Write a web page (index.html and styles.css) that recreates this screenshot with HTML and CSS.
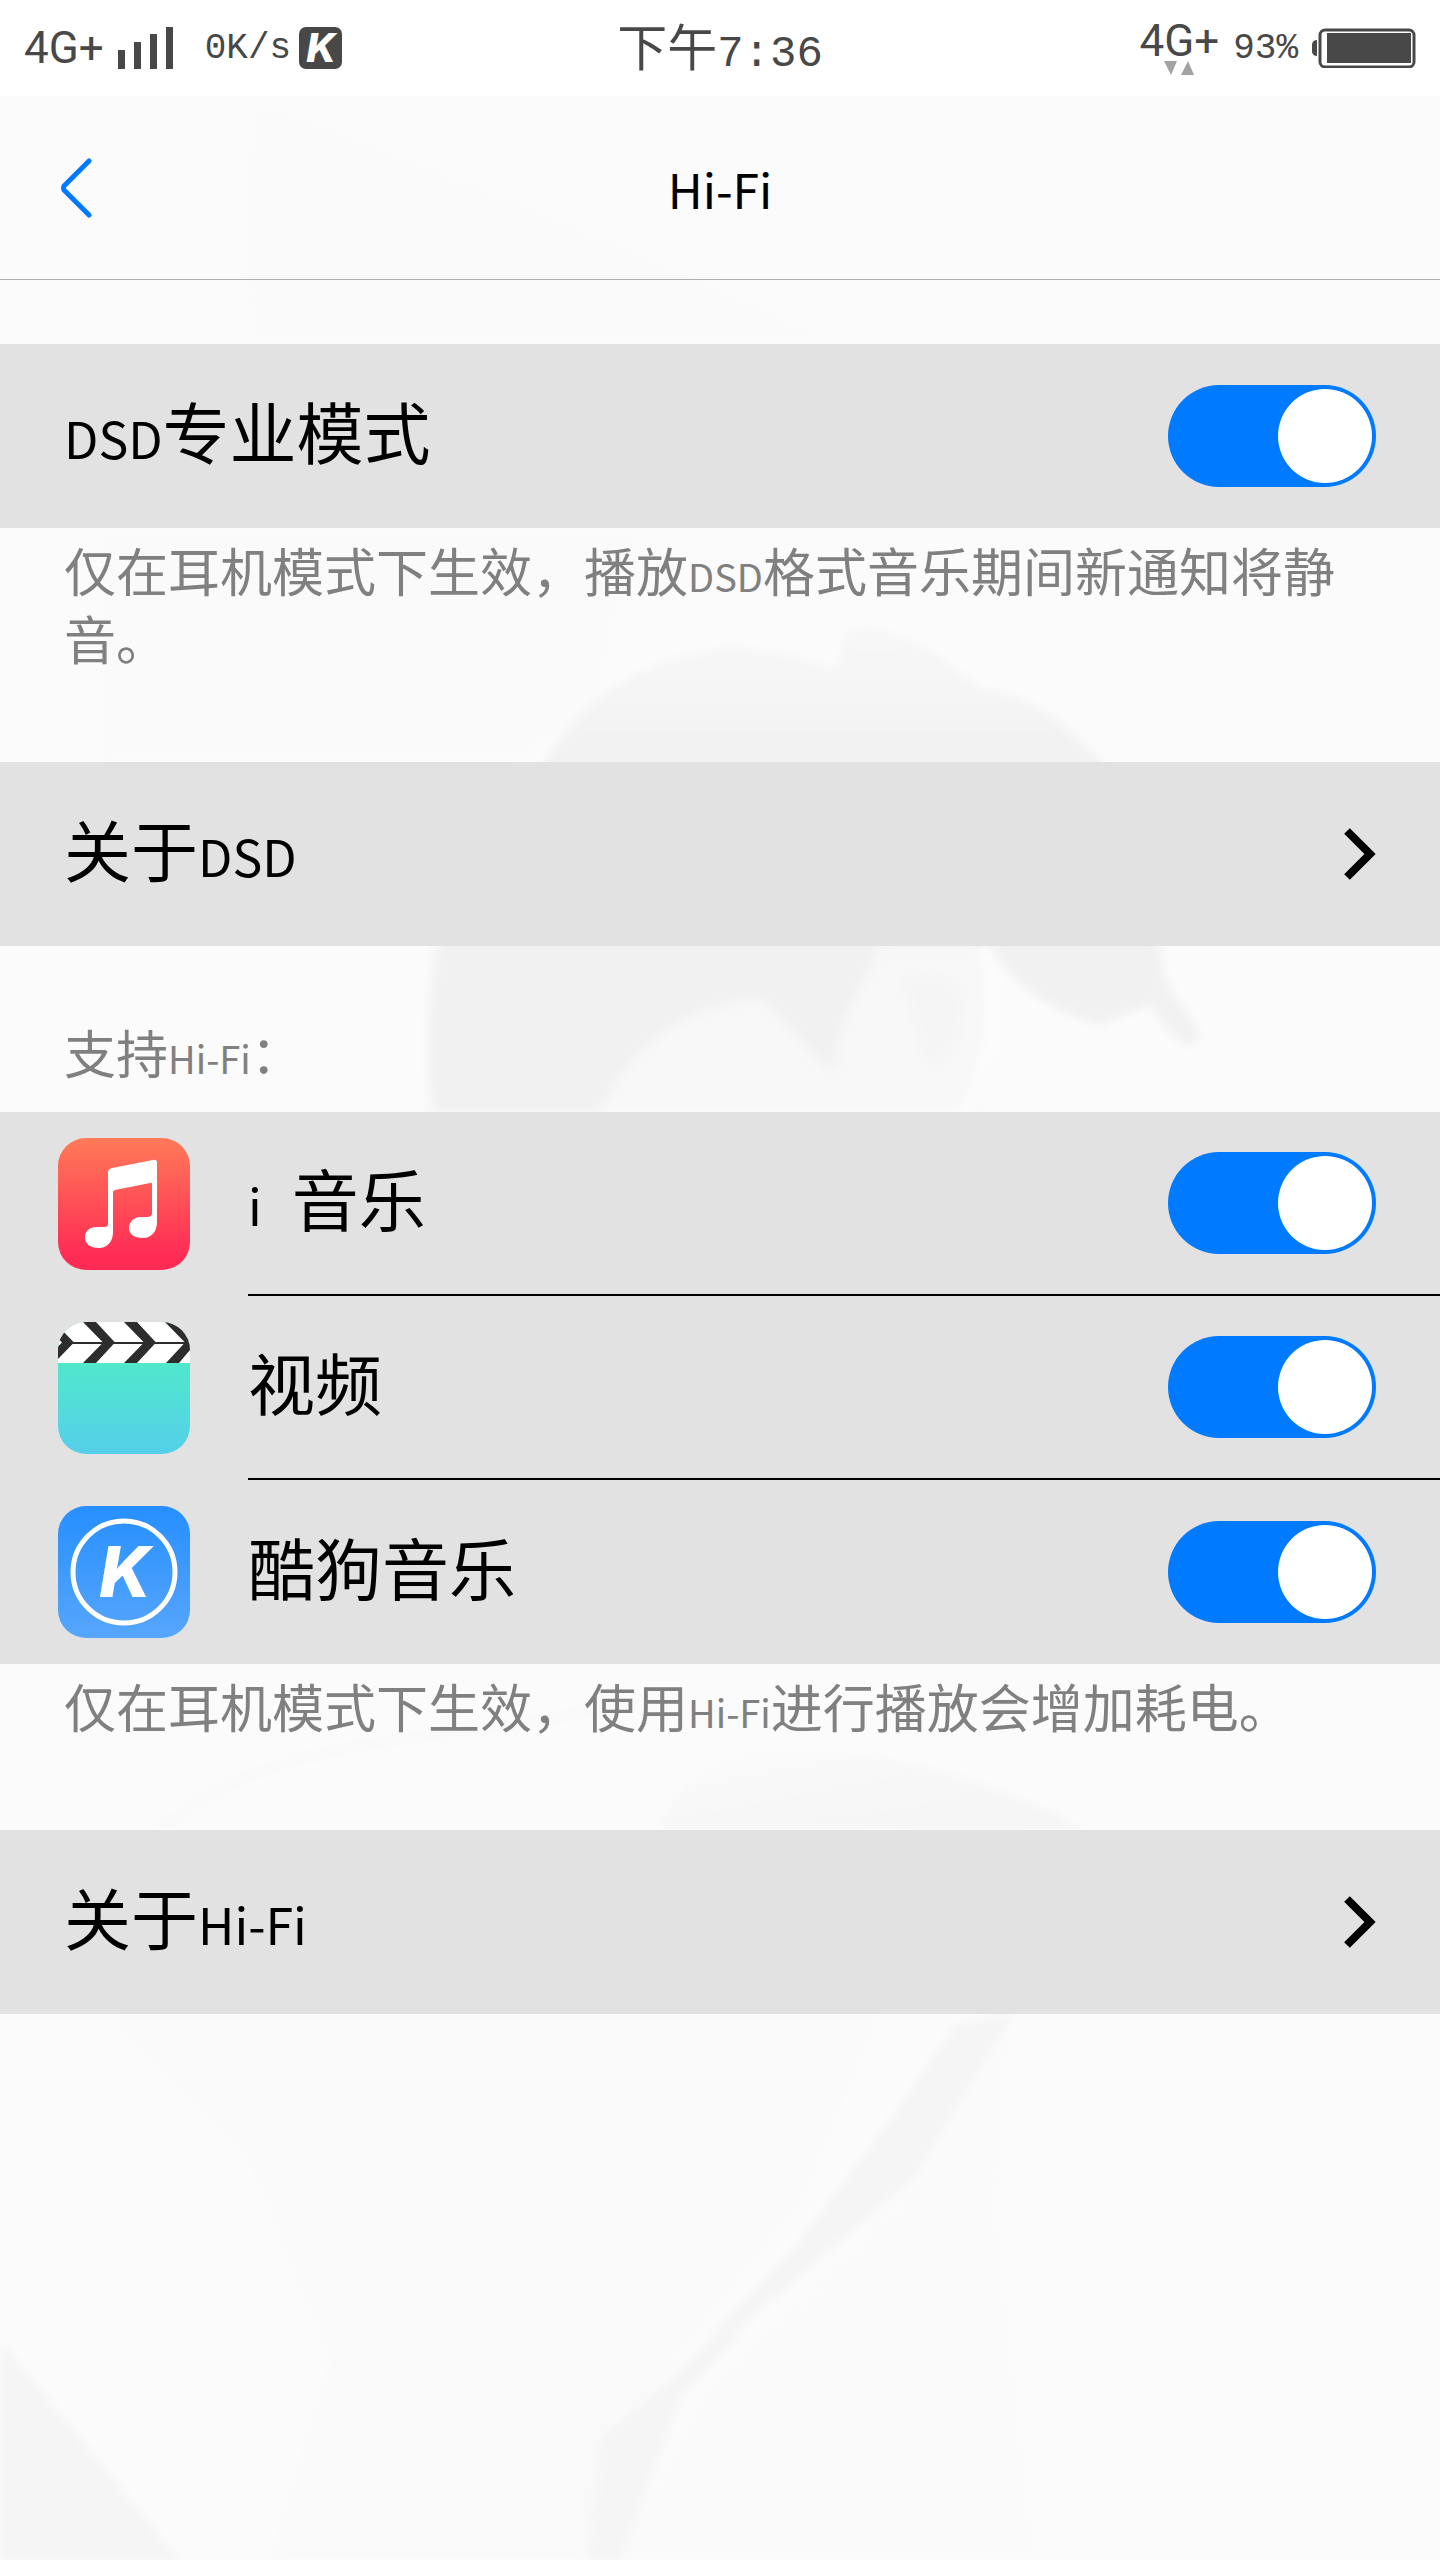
FILE: index.html
```html
<!DOCTYPE html>
<html lang="zh-CN">
<head>
    <meta charset="UTF-8">
    <meta name="viewport" content="width=device-width, initial-scale=1.0">
    <title>Hi-Fi</title>
    <link rel="stylesheet" href="styles.css">
</head>
<body>
    <svg class="wallpaper" viewBox="0 0 1440 2560" preserveAspectRatio="xMidYMin slice" aria-hidden="true">
        <defs>
            <filter id="soft"><feGaussianBlur stdDeviation="5"/></filter>
            <linearGradient id="hair" x1="0" y1="0" x2="0" y2="1">
                <stop offset="0" stop-color="#f8f8f8"/>
                <stop offset=".25" stop-color="#f2f2f2"/>
                <stop offset="1" stop-color="#f1f1f1"/>
            </linearGradient>
            <linearGradient id="arc" x1="0" y1="0" x2="1" y2="1">
                <stop offset="0" stop-color="#fafafa"/>
                <stop offset="1" stop-color="#f5f5f5"/>
            </linearGradient>
        </defs>
        <g filter="url(#soft)">
            <path fill="#fafafa" d="M250 96 L400 150 L620 240 L850 344 L250 344 L240 220 Z"/>
            <path fill="#fafafa" d="M100 528 H640 L600 700 L520 762 H100 Z"/>
            <path fill="url(#hair)" d="M545 762 C580 700 640 660 720 648 C780 645 820 665 838 670 C840 620 870 620 890 632 C930 645 960 670 980 690 C1030 690 1070 730 1102 762 L1160 946 C1165 1000 1190 1010 1200 1035 L1190 1048 C1170 1035 1160 1020 1150 1005 L1100 1025 C1050 1010 1010 985 990 946 L880 946 C870 980 840 1000 835 1070 C810 1060 790 1020 760 1000 C700 1000 630 1040 600 1112 L432 1112 C425 1050 428 1000 436 946 Z"/>
            <path fill="#f8f8f8" d="M880 946 C870 980 840 1000 835 1070 C810 1060 790 1020 760 1000 C700 1000 630 1040 600 1112 H980 C1000 1050 1000 980 985 946 Z"/>
            <path fill="#f5f5f5" d="M905 980 C930 970 960 980 962 1000 C965 1040 940 1070 925 1060 C920 1030 910 1010 905 980 Z"/>
            <path fill="none" stroke="#fcfcfc" stroke-width="12" d="M985 946 C1000 1010 990 1070 965 1112"/>
            <path fill="url(#arc)" d="M658 1830 C680 1770 740 1748 800 1750 C920 1752 1010 1790 1085 1830 Z"/>
            <path fill="none" stroke="#f8f8f8" stroke-width="8" d="M160 1830 C220 1780 290 1755 400 1740 S560 1720 640 1700"/>
            <path fill="#f9f9f9" d="M110 2014 L880 2014 L800 2200 L640 2400 L600 2560 L270 2560 L330 2360 L250 2160 Z"/>
            <path fill="#f5f5f5" d="M955 2025 L1013 2014 L1000 2110 L900 2190 L760 2310 L680 2400 L620 2560 L588 2560 L602 2440 L690 2360 L800 2240 L890 2120 Z"/>
            <path fill="#fafafa" d="M1013 2014 L1000 2200 L1040 2560 L620 2560 L700 2390 L900 2200 Z"/>
            <path fill="#f5f5f5" d="M0 2340 L90 2450 L180 2560 H0 Z"/>
        </g>
    </svg>

    <div class="status-bar">
        <div class="status-group">
            <span class="network">4G+</span>
            <svg class="signal" viewBox="0 0 55 42" aria-hidden="true">
                <path d="M0 23h7v19H0zM16 15h7v27h-7zM32 7h7v35h-7zM48 0h7v42h-7z"/>
            </svg>
            <span class="speed">0K/s</span>
            <svg class="badge" viewBox="0 0 43 42" aria-hidden="true">
                <rect width="43" height="42" rx="7" fill="#484848"/>
                <text class="logo-letter" x="22" y="35" font-size="40">K</text>
            </svg>
        </div>
        <div class="clock">下午<span class="clock-digits">7:36</span></div>
        <div class="status-group right">
            <div class="network-data">
                <span class="network">4G+</span>
                <svg class="arrows" viewBox="0 0 30 14" aria-hidden="true">
                    <path d="M0 0h13l-6 14zM17 14h13L24 0z"/>
                </svg>
            </div>
            <span class="battery-level">93%</span>
            <svg class="battery" viewBox="0 0 104 40" aria-hidden="true">
                <path fill="#484848" d="M5 12v16C1 28 0 25 0 23v-6c0-2 1-5 5-5z"/>
                <rect x="8" y="2" width="94" height="37" rx="5" fill="none" stroke="#484848" stroke-width="3"/>
                <rect x="15" y="5" width="84" height="30" fill="#484848"/>
            </svg>
        </div>
    </div>

    <header class="header">
        <button class="back" type="button" aria-label="返回">
            <svg viewBox="0 0 32 60" aria-hidden="true">
                <path d="M29 3 L4 28 Q3 30 4 32 L29 57"/>
            </svg>
        </button>
        <h1 class="title">Hi-Fi</h1>
    </header>

    <main>
        <label class="row first">
            <span class="name"><span class="latin">DSD</span>专业模式</span>
            <input class="switch" type="checkbox" checked>
        </label>
        <p class="hint">仅在耳机模式下生效，播放<span class="latin">DSD</span>格式音乐期间新通知将静音。</p>

        <a class="row" href="#dsd">
            <span class="name">关于<span class="latin">DSD</span></span>
            <svg class="chevron" viewBox="0 0 32 52" aria-hidden="true">
                <path d="M3 3 L26 26 L3 49"/>
            </svg>
        </a>

        <h2 class="group-title">支持<span class="latin">Hi-Fi</span>：</h2>
        <div class="group">
            <label class="row app">
                <svg class="app-icon" viewBox="0 0 132 132" aria-hidden="true">
                    <defs>
                        <linearGradient id="music" x1="0" y1="0" x2="0" y2="1">
                            <stop offset="0" stop-color="#ff7a58"/>
                            <stop offset=".9" stop-color="#ff2b55"/>
                        </linearGradient>
                    </defs>
                    <rect width="132" height="132" rx="28" fill="url(#music)"/>
                    <path fill="#fff" d="M50 34 Q50 31 54 30 L95 22 Q99 21 99 25 V84 C99 94 93 100 85 100 C76 100 71 96 71 90 C71 84 76 79 82 79 H89 Q94 79 94 75 V46 Q94 44 92 45 L57 52 Q55 53 55 54 V94 C55 104 49 110 41 110 C32 110 27 106 27 99 C27 93 32 89 38 89 H46 Q50 89 50 86 Z"/>
                </svg>
                <span class="app-body">
                    <span class="name"><span class="latin">i</span>&nbsp;&nbsp;音乐</span>
                    <input class="switch" type="checkbox" checked>
                </span>
            </label>
            <label class="row app">
                <svg class="app-icon" viewBox="0 0 132 132" aria-hidden="true">
                    <defs>
                        <linearGradient id="video" x1="0" y1="0" x2="0" y2="1">
                            <stop offset=".3" stop-color="#50e8cb"/>
                            <stop offset="1" stop-color="#55cfea"/>
                        </linearGradient>
                        <clipPath id="tile"><rect width="132" height="132" rx="28"/></clipPath>
                    </defs>
                    <g clip-path="url(#tile)">
                        <rect width="132" height="132" fill="url(#video)"/>
                        <rect width="132" height="41" fill="#fff"/>
                        <path fill="#2d2d2d" d="M-17 0h13L16 20.500 L-4 41h-13L4 20.500zM25 0h13L57 20.500 L38 41H25L45 20.500zM66 0h13L98 20.500 L79 41H66L86 20.500zM107 0h25V41h-24L127 20.500z"/>
                        <path fill="#fff" d="M132 28V41H121z"/>
                        <path stroke="#2d2d2d" stroke-width="2" d="M14 21H128"/>
                    </g>
                </svg>
                <span class="app-body">
                    <span class="name">视频</span>
                    <input class="switch" type="checkbox" checked>
                </span>
            </label>
            <label class="row app">
                <svg class="app-icon" viewBox="0 0 132 132" aria-hidden="true">
                    <defs>
                        <linearGradient id="kugou" x1="0" y1="0" x2="0" y2="1">
                            <stop offset="0" stop-color="#268fff"/>
                            <stop offset="1" stop-color="#57a6fb"/>
                        </linearGradient>
                    </defs>
                    <rect width="132" height="132" rx="28" fill="url(#kugou)"/>
                    <circle cx="66" cy="66" r="51" fill="none" stroke="#fff" stroke-width="5"/>
                    <text class="logo-letter" x="67" y="91" font-size="70">K</text>
                </svg>
                <span class="app-body">
                    <span class="name">酷狗音乐</span>
                    <input class="switch" type="checkbox" checked>
                </span>
            </label>
        </div>
        <p class="hint">仅在耳机模式下生效，使用<span class="latin">Hi-Fi</span>进行播放会增加耗电。</p>

        <a class="row" href="#hifi">
            <span class="name">关于<span class="latin">Hi-Fi</span></span>
            <svg class="chevron" viewBox="0 0 32 52" aria-hidden="true">
                <path d="M3 3 L26 26 L3 49"/>
            </svg>
        </a>
    </main>
</body>
</html>
```

FILE: styles.css
```css
* {
    box-sizing: border-box;
}
body {
    margin: 0;
    position: relative;
    min-height: 100vh;
    overflow-x: hidden;
    background-color: #fbfbfb;
    color: #000;
    font-family: "Noto Sans CJK SC", sans-serif;
}
.wallpaper {
    position: absolute;
    top: 0;
    left: 0;
    width: 100%;
    height: 100%;
    z-index: -1;
}

/* status bar */
.status-bar {
    display: grid;
    grid-template-columns: 1fr auto 1fr;
    align-items: center;
    height: 96px;
    padding: 0 24px;
    background-color: #fff;
    color: #484848;
}
.status-group {
    display: flex;
    align-items: center;
}
.status-group.right {
    justify-content: flex-end;
}
.network {
    font-family: Roboto, sans-serif;
    font-size: 44px;
    line-height: 48px;
}
.signal {
    width: 55px;
    height: 42px;
    margin-left: 14px;
    fill: #484848;
}
.speed {
    margin-left: 32px;
    font-family: "Liberation Mono", monospace;
    font-size: 36px;
}
.badge {
    width: 43px;
    height: 42px;
    margin-left: 8px;
    overflow: visible;
}
.logo-letter {
    fill: #fff;
    font-family: Inter, sans-serif;
    font-weight: 800;
    font-style: italic;
    text-anchor: middle;
}
.clock {
    padding-bottom: 8px;
    font-size: 50px;
    line-height: 64px;
}
.clock-digits {
    font-family: "Liberation Mono", monospace;
    font-size: 44px;
    line-height: 1;
}
.network-data {
    display: flex;
    flex-direction: column;
    align-items: center;
    margin-right: 14px;
}
.network-data .network {
    line-height: 40px;
}
.arrows {
    width: 30px;
    height: 14px;
    fill: #a3a3a3;
}
.battery-level {
    font-family: "Liberation Mono", monospace;
    font-size: 36px;
    margin-right: 14px;
}
.battery {
    width: 104px;
    height: 40px;
}

/* title bar */
.header {
    display: grid;
    grid-template-columns: 1fr auto 1fr;
    align-items: center;
    height: 184px;
    padding: 0 60px;
    border-bottom: 1px solid #b0b0b0;
}
.back {
    justify-self: start;
    display: flex;
    padding: 0;
    border: none;
    background: none;
    cursor: pointer;
}
.back svg {
    width: 32px;
    height: 60px;
    fill: none;
    stroke: #007aff;
    stroke-width: 5;
    stroke-linecap: round;
}
.title {
    margin: 0;
    font-size: 48px;
    font-weight: normal;
}

/* settings list */
.row {
    display: flex;
    align-items: center;
    justify-content: space-between;
    height: 184px;
    padding: 0 64px;
    background-color: #e2e2e2;
    color: #000;
    text-decoration: none;
}
.row.first {
    margin-top: 64px;
}
.name {
    font-size: 67px;
    line-height: 96px;
    padding-bottom: 12px;
}
.latin {
    line-height: 1;
}
.name .latin {
    font-size: 50px;
}
.hint, .group-title {
    margin: 0;
    padding: 8px 64px 90px;
    color: #808080;
    font-size: 52px;
    font-weight: normal;
    line-height: 68px;
}
.hint .latin, .group-title .latin {
    font-size: 38px;
}
.group-title {
    padding: 72px 64px 26px;
}
.chevron {
    width: 32px;
    height: 52px;
    fill: none;
    stroke: #000;
    stroke-width: 8;
}
.switch {
    appearance: none;
    width: 208px;
    height: 102px;
    margin: 0;
    padding: 4px;
    border-radius: 51px;
    background-color: #bbb;
    cursor: pointer;
}
.switch::before {
    content: "";
    display: block;
    width: 94px;
    height: 94px;
    border-radius: 50%;
    background-color: #fff;
}
.switch:checked {
    background-color: #007aff;
}
.switch:checked::before {
    margin-left: auto;
}

/* app rows, the line starts at the app name */
.row.app {
    gap: 58px;
    padding: 0 0 0 58px;
}
.app-icon {
    flex: none;
    width: 132px;
    height: 132px;
}
.app-body {
    flex: 1;
    display: flex;
    align-items: center;
    justify-content: space-between;
    height: 100%;
    padding-right: 64px;
    border-bottom: 2px solid #000;
}
.row.app:last-child .app-body {
    border-bottom: none;
}
```
